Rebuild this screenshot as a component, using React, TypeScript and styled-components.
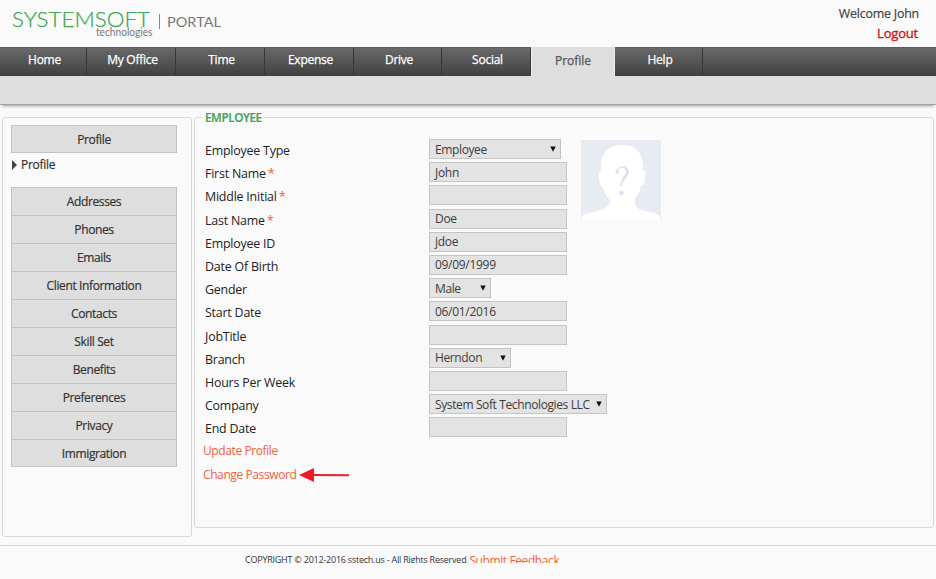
import React from 'react';
import styled, { createGlobalStyle } from 'styled-components';

const GlobalStyle = createGlobalStyle`
  * { box-sizing: border-box; }
  body {
    margin: 0;
    background: #fafafa;
    color: #333;
    font: 12px/20px "Open Sans", "Noto Sans", sans-serif;
    overflow: hidden;
  }
  a { color: inherit; text-decoration: none; }
`;

const Page = styled.div`
  width: 936px;
  height: 579px;
  display: flex;
  flex-direction: column;
`;

const Header = styled.header`
  height: 47px;
  flex: none;
  display: flex;
  justify-content: space-between;
  padding: 4px 17px 0 0;
`;

const Logo = styled.svg`
  display: block;
  width: 240px;
  height: 43px;
`;

const Account = styled.div`
  display: flex;
  flex-direction: column;
  align-items: flex-end;
  font-size: 12.4px;
  letter-spacing: -0.2px;
  line-height: 20px;
  color: #444;
  -webkit-text-stroke: 0.2px currentColor;
`;

const Logout = styled.a`
  && { color: #cc1016; }
  font-size: 13px;
  line-height: 19px;
  padding-right: 1px;
  -webkit-text-stroke: 0.3px currentColor;
`;

const Nav = styled.nav`
  height: 29px;
  flex: none;
  display: flex;
  background: linear-gradient(#696969, #404040);
  border-top: 1px solid #5c5c5c;
`;

const Tab = styled.a<{ $width: number; $active?: boolean }>`
  width: ${p => p.$width}px;
  height: ${p => (p.$active ? 29 : 28)}px;
  margin-top: ${p => (p.$active ? -1 : 0)}px;
  padding: ${p => (p.$active ? '4px 0 0' : '2px 0 0 3px')};
  flex: none;
  text-align: center;
  font-size: 12px;
  letter-spacing: ${p => (p.$active ? 0 : -0.25)}px;
  -webkit-text-stroke: 0.25px currentColor;
  && { color: ${p => (p.$active ? '#555' : '#fff')}; }
  background: ${p => (p.$active ? '#dedede' : 'transparent')};
  border-left: ${p => (p.$active ? '1px solid #eee' : '0')};
  border-right: 1px solid ${p => (p.$active ? '#eee' : '#383838')};
`;

const SubNav = styled.div`
  height: 29px;
  flex: none;
  background: #dedede;
  border-bottom: 1px solid #a2a2a2;
  box-shadow: 0 3px 3px -2px #999;
`;

const Content = styled.main`
  height: 441px;
  flex: none;
  display: flex;
  align-items: flex-start;
  gap: 2px;
  padding: 12px 2px 0;
  border-bottom: 1px solid #d3d3d3;
`;

const Sidebar = styled.aside`
  width: 190px;
  height: 420px;
  padding: 7px 14px 0 8px;
  border: 1px solid #d8d8d8;
  border-radius: 3px;
`;

const MenuButton = styled.a`
  display: block;
  height: 28px;
  border: 1px solid #c3c3c3;
  border-bottom-width: 0;
  background: #dedede;
  text-align: center;
  letter-spacing: -0.38px;
  line-height: 28px;
  -webkit-text-stroke: 0.2px currentColor;
  &:last-child { border-bottom-width: 1px; }
`;

const MenuGroup = styled.div`
  width: 166px;
`;

const Current = styled.div`
  height: 34px;
  display: flex;
  align-items: center;
  gap: 4px;
  padding: 0 0 11px 1px;
  letter-spacing: -0.3px;
  -webkit-text-stroke: 0.2px currentColor;
  svg { display: block; }
`;

const Panel = styled.fieldset`
  width: 741px;
  height: 417px;
  margin: -6px 0 0;
  padding: 0;
  border: 1px solid #d8d8d8;
  border-radius: 3px;
  min-width: 0;
`;

const Legend = styled.legend`
  margin-left: 8px;
  padding: 0 2px;
  height: 13px;
  line-height: 13px;
  font-size: 11.6px;
  letter-spacing: -0.35px;
  font-weight: 600;
  color: #40a055;
  -webkit-text-stroke: 0.2px currentColor;
`;

const Columns = styled.div`
  display: flex;
  padding: 15px 0 0 8px;
`;

const Form = styled.div`
  width: 378px;
`;

const Row = styled.div`
  height: 23.2px;
  display: flex;
  align-items: flex-start;
  white-space: nowrap;
`;

const Label = styled.label`
  width: 226px;
  flex: none;
  padding-left: 2px;
  font-size: 12.4px;
  letter-spacing: -0.2px;
  line-height: 23px;
  color: #222;
`;

const Star = styled.span`
  color: #e8662f;
  margin-left: 2px;
  font-size: 13px;
  line-height: 1;
`;

const Field = styled.div<{ $width: number; $select?: boolean }>`
  width: ${p => p.$width}px;
  height: 20px;
  flex: none;
  display: flex;
  justify-content: space-between;
  align-items: center;
  padding: 0 4px 0 5px;
  background: #e3e3e3;
  border: 1px solid #c4c4c4;
  font-size: 12px;
  letter-spacing: ${p => (p.$select ? -0.38 : -0.3)}px;
  line-height: 18px;
  color: #3c3c3c;
`;

const FieldText = styled.span`
  padding-top: 1px;
`;

const ActionLink = styled.a`
  && { color: #ee6240; }
  letter-spacing: -0.4px;
  line-height: 21px;
`;

const Avatar = styled.svg`
  display: block;
  width: 80px;
  height: 80px;
  margin-top: 1px;
`;

const Arrow = styled.svg`
  display: block;
  width: 51px;
  height: 16px;
  margin: 3px 0 0 3px;
`;

const Footer = styled.footer`
  height: 17px;
  overflow: hidden;
  display: flex;
  padding-left: 245px;
  white-space: nowrap;
  font-size: 9px;
  letter-spacing: -0.23px;
  line-height: 28px;
`;

const Feedback = styled.a`
  && { color: #ee6240; }
  height: 8px;
  margin: 9px 0 0 3px;
  overflow: hidden;
  font-size: 12px;
  letter-spacing: -0.4px;
  line-height: 11px;
`;

const tabs = [
  { label: 'Home', width: 87 },
  { label: 'My Office', width: 89 },
  { label: 'Time', width: 89 },
  { label: 'Expense', width: 89 },
  { label: 'Drive', width: 88 },
  { label: 'Social', width: 89 },
  { label: 'Profile', width: 84, active: true },
  { label: 'Help', width: 88 },
];

const menu = ['Addresses', 'Phones', 'Emails', 'Client Information', 'Contacts', 'Skill Set', 'Benefits', 'Preferences', 'Privacy', 'Immigration'];

const fields = [
  { label: 'Employee Type', value: 'Employee', width: 132, select: true },
  { label: 'First Name', value: 'John', width: 138, required: true },
  { label: 'Middle Initial', value: '', width: 138, required: true },
  { label: 'Last Name', value: 'Doe', width: 138, required: true },
  { label: 'Employee ID', value: 'jdoe', width: 138 },
  { label: 'Date Of Birth', value: '09/09/1999', width: 138 },
  { label: 'Gender', value: 'Male', width: 62, select: true },
  { label: 'Start Date', value: '06/01/2016', width: 138 },
  { label: 'JobTitle', value: '', width: 138 },
  { label: 'Branch', value: 'Herndon', width: 82, select: true },
  { label: 'Hours Per Week', value: '', width: 138 },
  { label: 'Company', value: 'System Soft Technologies LLC', width: 178, select: true },
  { label: 'End Date', value: '', width: 138 },
];

const Caret = () => (
  <svg width="6" height="6" viewBox="0 0 6 6"><path d="M.3.5h5.4L3 5.7z" fill="#111" /></svg>
);

export default function App() {
  return (
    <Page>
      <GlobalStyle />
      <Header>
        <Logo viewBox="0 4 240 43" fontFamily="Lato, sans-serif">
          <text x="12" y="27" fontSize="21" fontWeight="300" fill="#3fa757" stroke="#3fa757" strokeWidth=".25" textLength="138" lengthAdjust="spacingAndGlyphs">SYSTEMSOFT</text>
          <text x="96" y="35.5" fontSize="10.5" fill="#777" textLength="56.5" lengthAdjust="spacingAndGlyphs">technologies</text>
          <path d="M159.5 14v15" stroke="#888" />
          <text x="167" y="27" fontSize="13.5" fill="#777" textLength="54" lengthAdjust="spacingAndGlyphs">PORTAL</text>
        </Logo>
        <Account>
          <span>Welcome John</span>
          <Logout href="#">Logout</Logout>
        </Account>
      </Header>
      <Nav>
        {tabs.map(t => <Tab key={t.label} href="#" $width={t.width} $active={t.active}>{t.label}</Tab>)}
      </Nav>
      <SubNav />
      <Content>
        <Sidebar>
          <MenuGroup><MenuButton href="#">Profile</MenuButton></MenuGroup>
          <Current>
            <svg width="5" height="10" viewBox="0 0 5 10"><path d="M0 0l5 5-5 5z" fill="#444" /></svg>
            Profile
          </Current>
          <MenuGroup>
            {menu.map(m => <MenuButton key={m} href="#">{m}</MenuButton>)}
          </MenuGroup>
        </Sidebar>
        <Panel>
          <Legend>EMPLOYEE</Legend>
          <Columns>
            <Form>
              {fields.map(f => (
                <Row key={f.label}>
                  <Label>{f.label}{f.required && <Star>*</Star>}</Label>
                  <Field $width={f.width} $select={f.select}>
                    <FieldText>{f.value}</FieldText>
                    {f.select && <Caret />}
                  </Field>
                </Row>
              ))}
              <Row><ActionLink href="#">Update Profile</ActionLink></Row>
              <Row>
                <ActionLink href="#">Change Password</ActionLink>
                <Arrow viewBox="0 0 51 16">
                  <path d="M0 8L15 1v14z" fill="#ed1c24" />
                  <path d="M14 8l36 .3" stroke="#ed1c24" strokeWidth="2" />
                </Arrow>
              </Row>
            </Form>
            <Avatar viewBox="0 0 80 80">
              <path d="M0 0h80v80H0z" fill="#e7ebf2" />
              <path d="M1 80v-4c3-3 16-4 23-8 5-3 6-6 4-9-3-3-5-7-6-12-2 0-4-4-4-9 0-4 0-7 2-7C19 14 26 5 41 5s21 8 21 25c3 1 3 4 2 9 0 5-2 7-4 7-1 6-3 9-6 12-1 5 0 8 4 11 7 3 18 3 21 7v4z" fill="#fff" />
              <path d="M36 32c0-6 11-7.5 11 0 0 6-7 7-7 14.5" fill="none" stroke="#d5e2f4" strokeWidth="1.5" />
              <path d="M44 28c5 4 1 8-2.500 11.500" fill="none" stroke="#d5e2f4" strokeWidth="2.5" />
              <circle cx="36.2" cy="32" r="1.8" fill="#d5e2f4" />
              <circle cx="40.5" cy="53" r="2.2" fill="#d5e2f4" />
            </Avatar>
          </Columns>
        </Panel>
      </Content>
      <Footer>
        <span>COPYRIGHT © 2012-2016 sstech.us - All Rights Reserved</span>
        <Feedback href="#">Submit Feedback</Feedback>
      </Footer>
    </Page>
  );
}
